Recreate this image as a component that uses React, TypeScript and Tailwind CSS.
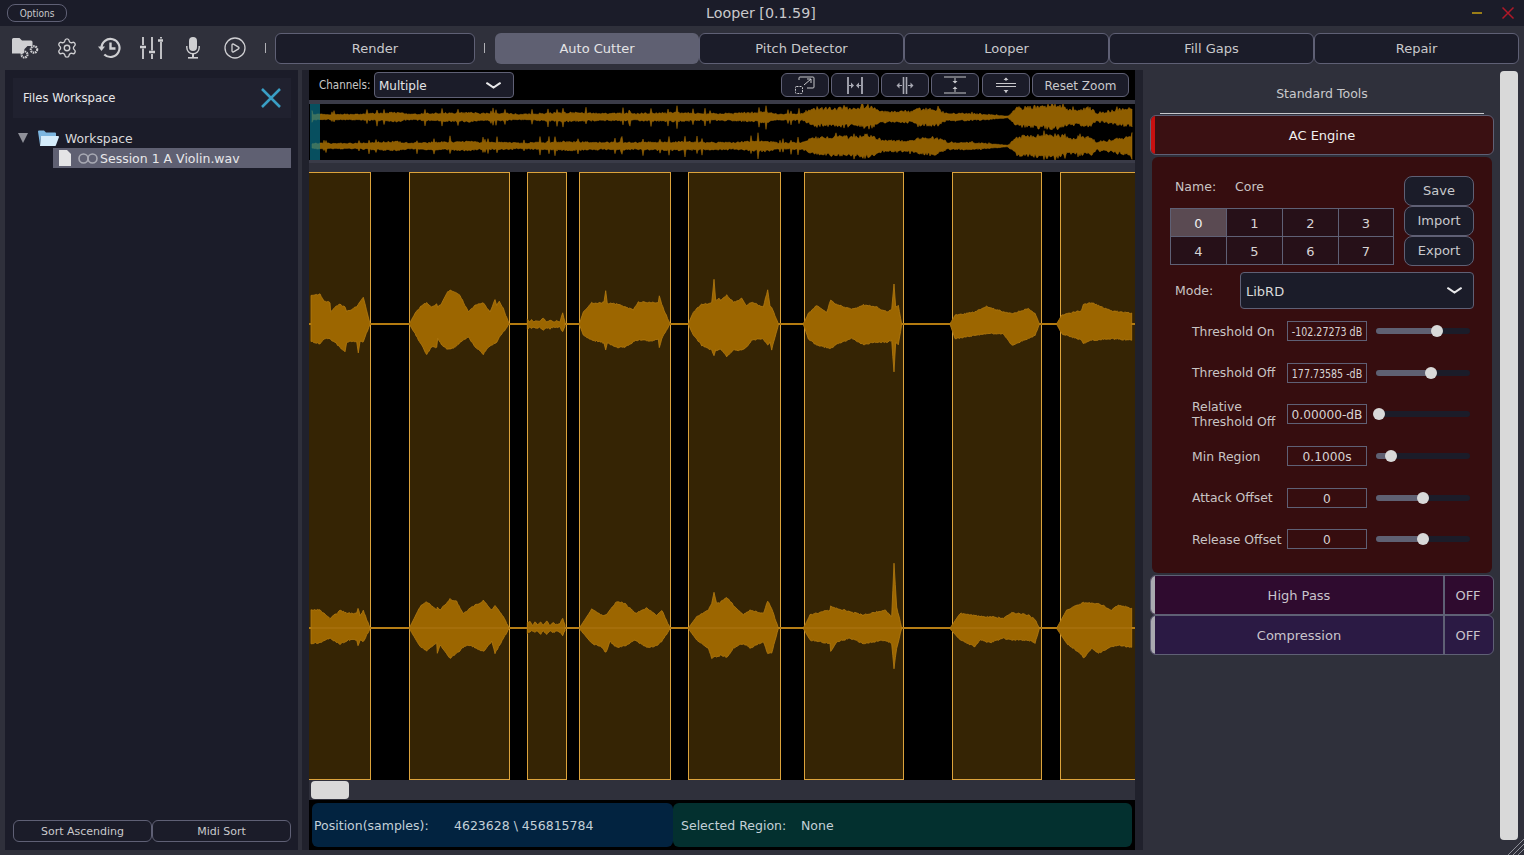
import React from 'react';
import { Settings, CirclePlay } from 'lucide-react';

type Pt = [number, number, number];

const rnd = (n: number) => {
  const s = Math.sin(n * 12.9898) * 43758.5453;
  return s - Math.floor(s);
};

// points read off the 3x crops: [x, top y, bottom y]
const wavePath = (c: number, cy: number, pts: Pt[], seed: number, rough = 1.3) => {
  const real = pts.map(([x, t, b]) => [300 + x / 3, (c - t) / 3, (b - c) / 3]);
  let up = '';
  let down = '';
  for (let i = 0; i < real.length - 1; i++) {
    const [xa, ua, da] = real[i];
    const [xb, ub, db] = real[i + 1];
    const steps = Math.max(1, Math.round((xb - xa) / 1.2));
    for (let s = 0; s < steps; s++) {
      const f = s / steps;
      const x = xa + (xb - xa) * f;
      const j1 = (rnd(x + seed) - 0.5) * rough * Math.min(1, ua / 4);
      const j2 = (rnd(x + seed + 7) - 0.5) * rough * Math.min(1, da / 4);
      up += `L${x.toFixed(1)} ${(cy - (ua + (ub - ua) * f) - j1).toFixed(1)}`;
      down = `L${x.toFixed(1)} ${(cy + (da + (db - da) * f) + j2).toFixed(1)}` + down;
    }
  }
  const [xl, ul, dl] = real[real.length - 1];
  return `M${up.slice(1)}L${xl.toFixed(1)} ${(cy - ul).toFixed(1)}L${xl.toFixed(1)} ${(cy + dl).toFixed(1)}${down}Z`;
};

const shift = (p: Pt[]): Pt[] => p.map(([x, t, b]) => [x + 1260, t, b]);

const topLeft: Pt[][] = [
  [[33,75,212],[45,72,218],[60,72,220],[72,92,205],[90,97,205],[92,125,208],[105,110,215],[120,102,232],[135,110,245],[140,122,215],[150,120,213],[170,108,215],[175,100,247],[180,95,212],[190,82,215],[195,100,200],[210,160,162]],
  [[328,160,162],[345,130,190],[365,105,225],[380,97,252],[395,110,230],[410,100,232],[413,110,205],[425,100,225],[440,68,235],[450,60,237],[470,68,228],[480,75,215],[505,125,200],[525,105,228],[550,97,252],[570,125,225],[585,88,220],[590,105,215],[598,92,200],[610,115,185],[627,160,162]],
  [[682,145,178],[688,155,170],[695,148,176],[702,155,170],[710,150,175],[718,154,170],[730,142,178],[738,154,172],[750,150,175],[760,155,170],[770,152,172],[780,154,170],[788,128,186],[795,155,168]],
  [[838,160,162],[850,125,195],[875,97,210],[890,100,212],[912,95,218],[917,62,238],[922,100,218],[950,100,232],[975,110,230],[1000,118,215],[1015,95,208],[1060,97,212],[1075,95,205],[1078,75,232],[1085,103,205],[1110,160,162]],
  [[1165,160,162],[1180,125,195],[1205,102,225],[1235,98,240],[1242,28,258],[1247,90,240],[1258,85,240]],
];
const topRight: Pt[][] = [
  [[0,90,235],[20,75,258],[40,95,240],[65,85,240],[80,105,230],[95,95,210],[130,110,205],[143,58,225],[150,108,215],[155,110,238],[175,160,165]],
  [[250,160,162],[265,130,205],[290,105,225],[320,125,232],[332,90,235],[345,100,225],[395,118,205],[430,103,222],[470,110,215],[500,125,215],[515,118,210],[522,40,305],[527,110,215],[535,105,225],[545,160,162]],
  [[690,160,162],[705,135,205],[765,125,195],[800,108,190],[850,125,190],[875,130,225],[925,115,205],[945,130,195],[958,160,162]],
  [[1010,160,162],[1025,135,190],[1085,120,210],[1090,103,220],[1115,97,210],[1175,122,205],[1235,128,210]],
];
const botLeft: Pt[][] = [
  [[33,150,250],[60,150,248],[90,175,235],[120,152,252],[145,160,240],[170,160,240],[174,145,258],[180,165,240],[190,152,245],[210,204,206]],
  [[328,204,206],[360,140,260],[380,125,272],[410,150,250],[412,140,280],[420,150,255],[450,117,295],[470,125,280],[490,160,262],[510,145,255],[550,122,275],[575,150,245],[585,135,280],[610,170,235],[627,204,206]],
  [[682,186,220],[690,184,215],[697,196,212],[705,186,218],[712,196,212],[722,186,222],[730,194,212],[740,184,224],[750,196,212],[760,188,218],[770,194,212],[780,190,216],[788,176,226],[795,195,212]],
  [[838,204,206],[875,148,250],[905,165,262],[918,165,278],[930,150,245],[950,124,262],[975,130,258],[1005,160,240],[1040,145,262],[1070,165,258],[1085,150,245],[1110,204,206]],
  [[1165,204,206],[1190,170,240],[1225,150,265],[1235,130,295],[1242,95,290],[1250,130,290],[1258,128,288]],
];
const botRight: Pt[][] = [
  [[0,128,285],[20,112,292],[40,135,265],[70,165,250],[90,150,265],[130,160,245],[143,123,280],[155,145,280],[175,204,206]],
  [[250,204,206],[270,165,240],[330,150,250],[332,138,275],[350,145,245],[390,155,235],[430,165,250],[495,150,240],[515,170,250],[522,10,325],[530,140,265],[545,204,206]],
  [[690,204,206],[720,160,240],[765,165,260],[780,170,240],[810,170,248],[850,175,235],[875,158,240],[925,165,240],[945,178,250],[958,204,206]],
  [[1010,204,206],[1040,150,250],[1085,130,285],[1090,128,295],[1115,130,265],[1135,130,280],[1175,150,260],[1195,135,255],[1235,145,262]],
];

const topWave = [...topLeft.slice(0, 4), [...topLeft[4], ...shift(topRight[0])], ...topRight.slice(1).map(shift)];
const botWave = [...botLeft.slice(0, 4), [...botLeft[4], ...shift(botRight[0])], ...botRight.slice(1).map(shift)];

const regions: [number, number][] = [
  [300, 371], [409, 510], [527, 567], [579, 671], [688, 781], [804, 904], [952, 1042], [1060, 1150],
];

const overviewAmps: [number, number][] = [
  [320,3],[355,3],[397,5],[410,3],[430,4],[470,5],[480,4],[505,4],[520,3],[560,5],[600,4],[640,4],[680,5],[700,4],[735,4],[765,6],[780,3],[803,4],[813,9],[833,10],[857,10],[867,13],[883,6],[910,6],[920,9],[937,9],[947,4],[970,4],[1008,1],[1017,10],[1057,13],[1070,8],[1090,10],[1097,4],[1133,11],
];

const overviewPath = (cy: number, seed: number) => {
  let up = '';
  let down = '';
  let k = 0;
  for (let x = 312; x <= 1132; x += 1) {
    while (k < overviewAmps.length - 2 && overviewAmps[k + 1][0] < x) k++;
    const [xa, a] = overviewAmps[k];
    const [xb, b] = overviewAmps[k + 1];
    const f = Math.max(0, (x - xa) / (xb - xa));
    const amp = a + (b - a) * f;
    const big = x < 800 ? 2.300 : 1.300;
    const spike = rnd(x + seed) > 0.93 ? big : 1;
    const u = amp * (0.65 + rnd(x * 1.3 + seed) * 0.4) * spike;
    const d = amp * (0.65 + rnd(x * 1.7 + seed) * 0.4) * spike;
    up += `L${x} ${(cy - u).toFixed(1)}`;
    down = `L${x} ${(cy + d).toFixed(1)}` + down;
  }
  return `M${up.slice(1)}${down}Z`;
};

const Overview = () => (
  <svg className="block w-[826px] h-[56px]" viewBox="309 104 826 56">
    <path d={overviewPath(117, 3)} fill="#8f5e00" stroke="#a87008" strokeWidth="0.5" />
    <path d={overviewPath(146, 11)} fill="#8f5e00" stroke="#a87008" strokeWidth="0.5" />
    <rect x="310" y="104" width="10" height="56" fill="#0b7f99" fillOpacity="0.62" />
  </svg>
);

const MainWave = () => (
  <svg className="block w-[826px] h-[608px]" viewBox="309 172 826 608">
    {regions.map(([a, b]) => (
      <rect key={a} x={a + 0.5} y="172.5" width={b - a - 1} height="607" fill="#352404" stroke="#dca33c" strokeWidth="1" />
    ))}
    <rect x="309" y="323" width="826" height="2" fill="#b47b10" />
    <rect x="309" y="627" width="826" height="2" fill="#b47b10" />
    {topWave.map((p, i) => <path key={i} d={wavePath(161, 324, p, i + 1)} fill="#9c6600" stroke="#b57b10" strokeWidth="0.8" />)}
    {botWave.map((p, i) => <path key={i} d={wavePath(204, 628, p, i + 21)} fill="#9c6600" stroke="#b57b10" strokeWidth="0.8" />)}
    <rect x="311" y="627.5" width="822" height="1" fill="#c08a28" fillOpacity="0.5" />
  </svg>
);

const FolderGears = () => (
  <svg width="27" height="24" viewBox="0 0 27 24" fill="#cfcfd2">
    <path d="M0 3.500a1.500 1.500 0 0 1 1.500-1.500h6l2.500 2.500h9a1.500 1.500 0 0 1 1.500 1.500v4h-5l-3 3-1 4.500h-11a1.500 1.500 0 0 1-1.500-1.500z" />
    <circle cx="12.500" cy="18.500" r="3" fill="none" stroke="#cfcfd2" strokeWidth="2.200" strokeDasharray="1.600 0.700" />
    <circle cx="22" cy="13.500" r="3.200" fill="none" stroke="#cfcfd2" strokeWidth="2.200" strokeDasharray="1.600 0.700" />
  </svg>
);

const HistoryIcon = () => (
  <svg width="23" height="22" viewBox="0 0 23 22" fill="none" stroke="#cfcfd2" strokeWidth="2.200">
    <path d="M3.500 11a9 9 0 1 1 2.800 6.500" />
    <path d="M0 9.500h7L3.500 14z" fill="#cfcfd2" stroke="none" />
    <path d="M12.500 5.500v6h5" strokeWidth="2.400" />
  </svg>
);

const SlidersIcon = () => (
  <svg width="23" height="22" viewBox="0 0 23 22" stroke="#cfcfd2" strokeWidth="1.800" fill="none">
    <path d="M3 0v8M3 11.500v10.500M12 0v13.500M12 17v5M21 0v1.500M21 5v17" />
    <path d="M0 10h6M9 15h6M18 3.500h5" strokeWidth="2.600" />
  </svg>
);

const MicIcon = () => (
  <svg width="14" height="22" viewBox="0 0 14 22" fill="#cfcfd2">
    <rect x="3" y="0" width="8" height="14" rx="4" />
    <path d="M0.800 9v1.500a6.200 6.200 0 0 0 12.400 0V9" fill="none" stroke="#cfcfd2" strokeWidth="1.400" />
    <rect x="6" y="16" width="2" height="4" />
    <rect x="2" y="20" width="10" height="1.600" />
  </svg>
);

const CloseIcon = () => (
  <svg width="20" height="20" viewBox="0 0 20 20" fill="none" stroke="#3a9fc5" strokeWidth="2.500">
    <path d="M1 1l18 18M19 1L1 19" />
  </svg>
);

// flatter than the lucide chevron
const Chevron = () => (
  <svg width="15" height="7" viewBox="0 0 15 7" fill="none" stroke="#e8e8ea" strokeWidth="2" strokeLinecap="round">
    <path d="M1 1.200Q4.500 3.500 7.500 5.500Q10.500 3.500 14 1.200" />
  </svg>
);

const FolderBlue = () => (
  <svg width="21" height="16" viewBox="0 0 21 16">
    <path d="M0 1.500a1 1 0 0 1 1-1h5l2 2h9a1 1 0 0 1 1 1V6H3L2 15z" fill="#7cb6e0" />
    <path d="M3 6h17a1 1 0 0 1 1 1l-3 8a1 1 0 0 1-1 1H2z" fill="#d5ecfb" />
  </svg>
);

const FileIcon = () => (
  <svg width="12" height="16" viewBox="0 0 12 16" fill="#e4e4e6">
    <path d="M0 0h8l4 4v12H0z" />
  </svg>
);

const InfinityIcon = () => (
  <svg width="20" height="11" viewBox="0 0 20 11" fill="none" stroke="#a9aab4" strokeWidth="1.600">
    <circle cx="5.500" cy="5.500" r="4.500" />
    <circle cx="14.500" cy="5.500" r="4.500" />
  </svg>
);

const ZoomSelect = () => (
  <svg width="20" height="18" viewBox="0 0 20 18" fill="none" stroke="#c8c8cc" strokeWidth="1">
    <path d="M4 4V2a1 1 0 0 1 1-1h13a1 1 0 0 1 1 1v9a1 1 0 0 1-1 1h-6" />
    <path d="M9 9l7-6M12 3h4v4" />
    <rect x="0.500" y="10.500" width="7" height="7" rx="1" strokeDasharray="2 1" />
  </svg>
);
const ZoomInH = () => (
  <svg width="16" height="17" viewBox="0 0 16 17" fill="#a9aab4" stroke="#a9aab4">
    <path d="M1 0v17M15 0v17" strokeWidth="1.800" />
    <path d="M2 8.500h2M14 8.500h-2" strokeWidth="1.200" />
    <path d="M4 5.500l3 3-3 3zM12 5.500l-3 3 3 3z" stroke="none" />
  </svg>
);
const ZoomOutH = () => (
  <svg width="18" height="17" viewBox="0 0 18 17" fill="#a9aab4" stroke="#a9aab4">
    <path d="M7.500 0v17M10.500 0v17" strokeWidth="1.600" />
    <path d="M3 8.500h3M15 8.500h-3" strokeWidth="1.200" />
    <path d="M3.500 5.500l-3 3 3 3zM14.500 5.500l3 3-3 3z" stroke="none" />
  </svg>
);
const ZoomInV = () => (
  <svg width="22" height="18" viewBox="0 0 22 18" fill="#c8c8cc" stroke="#c8c8cc">
    <path d="M0 1h22M0 17h22" strokeWidth="1.200" />
    <path d="M11 2v3M11 16v-3" strokeWidth="1" />
    <path d="M8.500 5L11 7.500 13.500 5zM8.500 13L11 10.500 13.500 13z" stroke="none" />
  </svg>
);
const ZoomOutV = () => (
  <svg width="20" height="18" viewBox="0 0 20 18" fill="#c8c8cc" stroke="#c8c8cc">
    <path d="M0 7.500h20M0 10.500h20" strokeWidth="1.200" />
    <path d="M10 2v3M10 17v-3" strokeWidth="1" />
    <path d="M7.500 4L10 1.500 12.500 4zM7.500 14L10 16.500 12.500 14z" stroke="none" />
  </svg>
);

const tabs = ['Auto Cutter', 'Pitch Detector', 'Looper', 'Fill Gaps', 'Repair'];

const Sep = () => <div className="w-px h-[10px] bg-[#b0b0b5]" />;

const Toolbar = () => (
  <div className="h-[44px] bg-[#2f303b] flex items-center pl-[4px] shrink-0">
    {[
      <FolderGears />,
      <Settings size={22} strokeWidth={1.5} color="#cfcfd2" />,
      <HistoryIcon />,
      <SlidersIcon />,
      <MicIcon />,
      <CirclePlay size={24} strokeWidth={1.300} color="#cfcfd2" />,
    ].map((icon, i) => (
      <div key={i} className="w-[42px] flex justify-center">{icon}</div>
    ))}
    <div className="ml-[9px] mr-[9px]"><Sep /></div>
    <button className="w-[200px] h-[31px] pt-[2px] rounded-md border border-[#5f6075] bg-[#1b1c29] text-[13px] text-[#c9c9cc]">Render</button>
    <div className="ml-[9px] mr-[10px]"><Sep /></div>
    {tabs.map((t, i) => (
      <button
        key={t}
        className={i === 0
          ? 'w-[204px] h-[31px] pt-[2px] rounded-md bg-[#5f6072] text-[13px] text-[#e4e4e6]'
          : 'w-[205px] h-[31px] pt-[2px] rounded-md border border-[#5f6075] bg-[#1b1c29] text-[13px] text-[#c9c9cc]'}
      >
        {t}
      </button>
    ))}
  </div>
);

const FilesPanel = () => (
  <div className="w-[293px] ml-[5px] bg-[#1b1c29] flex flex-col pl-[8px] pr-[7px] pt-[8px] pb-[8px]">
    <div className="h-[40px] bg-[#20212f] flex items-center justify-between pl-[10px] pr-[10px]">
      <span className="pt-[2px] text-[11.6px] text-[#e8e8ea]">Files Workspace</span>
      <CloseIcon />
    </div>
    <div className="mt-[10px] h-[20px] flex items-center text-[12.4px] text-[#d8d8da]">
      <span className="ml-[5px] w-0 h-0 border-l-[5px] border-r-[5px] border-t-[10px] border-l-transparent border-r-transparent border-t-[#8f9099]" />
      <span className="ml-[10px]"><FolderBlue /></span>
      <span className="ml-[6px] pt-[2px]">Workspace</span>
    </div>
    <div className="ml-[40px] h-[20px] bg-[#5f6072] flex items-center text-[12.5px] text-[#e8e8ea]">
      <span className="ml-[6px]"><FileIcon /></span>
      <span className="ml-[7px]"><InfinityIcon /></span>
      <span className="ml-[2px] pt-[2px]">Session 1 A Violin.wav</span>
    </div>
    <div className="mt-auto flex">
      {['Sort Ascending', 'Midi Sort'].map(s => (
        <button key={s} className="w-[139px] h-[22px] pt-[2px] rounded-md border border-[#5f6075] text-[11px] text-[#c9c9cc]">{s}</button>
      ))}
    </div>
  </div>
);

const ZoomBtn = ({ children }: { children: React.ReactNode }) => (
  <button className="w-[48px] h-[24px] rounded-md border border-[#5f6075] bg-[#1b1c29] flex items-center justify-center">{children}</button>
);

const Center = () => (
  <div className="w-[826px] flex flex-col">
    <div className="h-[30px] bg-black flex items-center pl-[10px] shrink-0">
      <span className="w-[55px] pt-[2px] text-[11.500px] text-[#c8c8c8] [font-stretch:condensed]">Channels:</span>
      <div className="w-[140px] h-[26px] rounded-sm border border-[#5f6075] bg-[#1b1c29] flex items-center justify-between pl-[4px] pr-[12px] text-[12px] text-[#e4e4e6]">
        <span className="pt-[2px]">Multiple</span>
        <Chevron />
      </div>
      <div className="ml-[267px] flex gap-[2px]">
        <ZoomBtn><ZoomSelect /></ZoomBtn>
        <ZoomBtn><ZoomInH /></ZoomBtn>
        <ZoomBtn><ZoomOutH /></ZoomBtn>
        <ZoomBtn><ZoomInV /></ZoomBtn>
        <div className="ml-[1px]"><ZoomBtn><ZoomOutV /></ZoomBtn></div>
        <button className="w-[97px] h-[24px] pt-[2px] rounded-md border border-[#5f6075] bg-[#1b1c29] text-[12px] text-[#c9c9cc]">Reset Zoom</button>
      </div>
    </div>
    <div className="h-[4px] bg-[#3a3b48] shrink-0" />
    <div className="h-[56px] bg-black shrink-0"><Overview /></div>
    <div className="h-[12px] bg-[#2f303b] border-t-[3px] border-[#3a3b48] shrink-0" />
    <div className="h-[608px] bg-black shrink-0"><MainWave /></div>
    <div className="h-[20px] bg-[#2f303b] pl-[2px] pt-[1px] shrink-0">
      <div className="w-[38px] h-[18px] rounded bg-[#d9d9d9]" />
    </div>
    <div className="h-[50px] bg-black flex px-[3px] py-[3px] text-[12.5px] shrink-0">
      <div className="w-[361px] pt-[2px] rounded-md bg-[#022340] text-[#c3d0d8] flex items-center pl-[2px]">
        <span className="w-[140px]">Position(samples):</span>
        <span>4623628 \ 456815784</span>
      </div>
      <div className="w-[459px] pt-[2px] rounded-md bg-[#03302f] text-[#c3d0d8] flex items-center pl-[8px]">
        <span className="w-[120px]">Selected Region:</span>
        <span>None</span>
      </div>
    </div>
  </div>
);

const params = [
  { label: ['Threshold On'], value: '-102.27273 dB', cond: true, pos: 61 },
  { label: ['Threshold Off'], value: '177.73585 -dB', cond: true, pos: 55 },
  { label: ['Relative', 'Threshold Off'], value: '0.00000-dB', cond: false, pos: 3 },
  { label: ['Min Region'], value: '0.1000s', cond: false, pos: 15 },
  { label: ['Attack Offset'], value: '0', cond: false, pos: 47 },
  { label: ['Release Offset'], value: '0', cond: false, pos: 47 },
];

const ParamRow = ({ label, value, cond, pos }: { label: string[]; value: string; cond: boolean; pos: number }) => (
  <div className="h-[41.6px] flex items-center pl-[40px] text-[12.4px] text-[#c9c4c4]">
    <div className="w-[95px] leading-[15px]">{label.map(l => <div key={l} className="whitespace-nowrap">{l}</div>)}</div>
    <div className="w-[80px] h-[20px] pt-[2px] border border-[#5f6075] flex items-center justify-center whitespace-nowrap text-[#d8d4d4] text-[12.2px]">
      {cond ? <span className="text-[12px] [font-stretch:condensed] scale-x-[0.88]">{value}</span> : value}
    </div>
    <div className="ml-[9px] w-[94px] h-[6px] rounded-full bg-[#1b1c29] relative">
      <div className="h-full rounded-full bg-[#5f6072]" style={{ width: pos }} />
      <div className="absolute top-[-3px] w-[12px] h-[12px] rounded-full bg-[#d9d9d9]" style={{ left: pos - 6 }} />
    </div>
  </div>
);

const ToggleRow = ({ title, bg }: { title: string; bg: string }) => (
  <div className={`h-[40px] rounded-md border border-[#5f6075] flex overflow-hidden text-[13px] text-[#c9c4cc] ${bg}`}>
    <div className="w-[4px] bg-[#a9aab0]" />
    <div className="w-[288px] pt-[2px] flex items-center justify-center">{title}</div>
    <div className="flex-1 pt-[2px] pr-[2px] border-l-2 border-[#5f6075] flex items-center justify-center">OFF</div>
  </div>
);

const ToolPanel = () => (
  <div className="w-[381px] bg-[#2f303b] flex pr-[6px]">
    <div className="w-[344px] ml-[7px]">
      <div className="h-[44px] mx-[10px] border-b border-[#c8c8cc] flex items-center justify-center pt-[6px] text-[12.5px] text-[#c9c9cc]">Standard Tools</div>
      <div className="mt-[1px] h-[40px] rounded-md border border-[#5f6075] bg-[#3a1012] flex overflow-hidden">
        <div className="w-[4px] bg-[#c81010]" />
        <div className="flex-1 pt-[2px] pr-[4px] flex items-center justify-center text-[13px] text-[#f0f0f0]">AC Engine</div>
      </div>
      <div className="mt-[2px] mx-[2px] h-[416px] rounded-md bg-[#360d0f] pt-[19px]">
        <div className="flex pl-[18px]">
          <div className="w-[224px]">
            <div className="h-[32px] flex items-start pt-[2px] pl-[5px] text-[12.5px] text-[#c9c4c4]">
              <span className="w-[60px]">Name:</span><span>Core</span>
            </div>
            <div className="grid grid-cols-[56px_56px_56px_54px] border border-[#5f6075] w-[224px] h-[57px] text-[13px] text-[#d8d4d4]">
              {[0, 1, 2, 3, 4, 5, 6, 7].map(n => (
                <div key={n} className={`flex items-center justify-center pt-[2px] border-[#5f6075] ${n % 4 !== 3 ? 'border-r' : ''} ${n < 4 ? 'border-b' : ''} ${n === 0 ? 'bg-[#5a4a52] text-[#f0f0f0]' : 'bg-[#261018]'}`}>{n}</div>
              ))}
            </div>
          </div>
          <div className="ml-[10px] flex flex-col">
            {['Save', 'Import', 'Export'].map(s => (
              <button key={s} className="w-[70px] h-[30px] rounded-lg border border-[#5f6075] bg-[#1b1c29] text-[13px] text-[#c9c9cc]">{s}</button>
            ))}
          </div>
        </div>
        <div className="mt-[6px] flex items-center pl-[23px] text-[12.5px] text-[#c9c4c4]">
          <span className="w-[65px] pt-[2px]">Mode:</span>
          <div className="w-[234px] h-[37px] rounded border border-[#5f6075] bg-[#1b1c29] flex items-center justify-between pl-[5px] pr-[11px] text-[13px] text-[#d8d8da]">
            <span className="pt-[2px]">LibRD</span>
            <Chevron />
          </div>
        </div>
        <div className="mt-[1.5px]">
          {params.map(p => <ParamRow key={p.label.join()} {...p} />)}
        </div>
      </div>
      <div className="mt-[2px]"><ToggleRow title="High Pass" bg="bg-[#2f0b2f]" /></div>
      <ToggleRow title="Compression" bg="bg-[#2b1a44]" />
    </div>
    <div className="w-[18px] ml-[6px] mt-[1px] h-[769px] rounded bg-[#d9d9d9]" />
  </div>
);

export default function App() {
  return (
    <div className="w-[1524px] h-[855px] overflow-hidden bg-[#2f303b] flex flex-col relative font-['DejaVu_Sans',sans-serif]">
      <div className="h-[26px] bg-[#1b1c29] flex items-center shrink-0">
        <button className="ml-[7px] w-[60px] h-[18px] rounded-lg border border-[#5f6075] text-[10px] text-[#c9c9cc] [font-stretch:condensed]">Options</button>
        <span className="ml-[639px] pt-[2px] text-[14.250px] text-[#c9c9cc]">Looper [0.1.59]</span>
        <div className="ml-auto mr-[5px] flex items-center gap-[15px]">
          <div className="w-[10px] h-[2px] bg-[#9a7d17]" />
          <svg width="22" height="22" viewBox="0 0 22 22" fill="none" stroke="#b01828" strokeWidth="1.500">
            <path d="M5.500 5.500l11 11M16.500 5.500l-11 11" />
          </svg>
        </div>
      </div>
      <Toolbar />
      <div className="flex h-[780px] shrink-0">
        <FilesPanel />
        <div className="w-[4px]" />
        <div className="w-[7px] bg-[#20212c]" />
        <Center />
        <div className="w-[8px] bg-[#20212c]" />
        <ToolPanel />
      </div>
      <svg className="absolute right-0 bottom-0" width="18" height="18" viewBox="0 0 18 18" stroke="#8f9099" strokeWidth="1">
        <path d="M18 2L2 18M18 7L7 18M18 12L12 18" />
      </svg>
    </div>
  );
}
